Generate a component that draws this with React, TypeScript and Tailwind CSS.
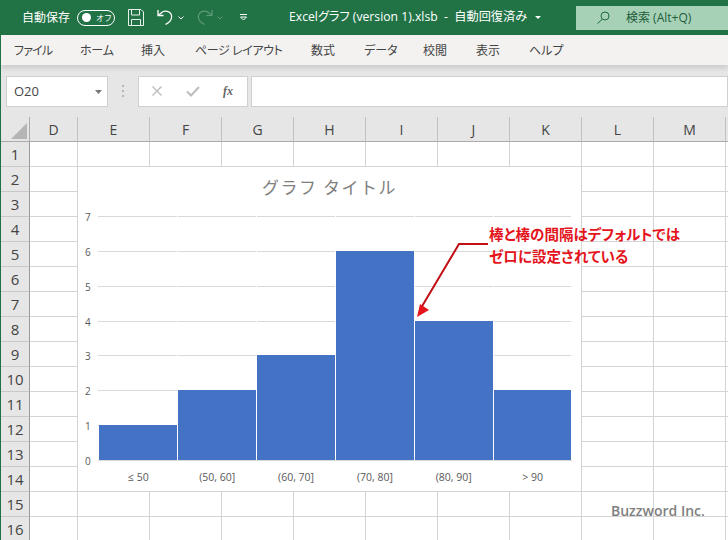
import React from "react";

const jp = "font-['Open_Sans','Noto_Sans_CJK_JP',sans-serif] [font-feature-settings:'palt']";
const columns: [string, number][] = [["D", 48], ["E", 72], ["F", 72], ["G", 72], ["H", 72], ["I", 72], ["J", 72], ["K", 72], ["L", 72], ["M", 72], ["", 3]];
const rows = Array.from({ length: 16 }, (_, i) => i + 1);
const menu: [string, string][] = [
  ["ファイル", "w-[38px] tracking-[-0.8px]"], ["ホーム", "w-[33px] tracking-[-0.2px]"], ["挿入", "w-[26px]"], ["ページ レイアウト", "w-[88px] tracking-[-0.4px]"],
  ["数式", "w-[25px]"], ["データ", "w-[31px]"], ["校閲", "w-[25px]"], ["表示", "w-[25px]"], ["ヘルプ", "w-[32px]"],
];
const bars = [1, 2, 3, 6, 4, 2];
const labels = ["≤ 50", "(50, 60]", "(60, 70]", "(70, 80]", "(80, 90]", "> 90"];

function TitleBar() {
  return (
    <div className="flex h-[35px] items-center bg-[#217346] text-white">
      <span className="ml-[21px] w-[48px] whitespace-nowrap text-[12px] leading-none">自動保存</span>
      <div className="ml-[7px] flex h-[16px] w-[38px] shrink-0 items-center rounded-full border border-white pl-[4px]">
        <span className="h-[9px] w-[9px] shrink-0 rounded-full bg-white" />
        <span className="ml-[5px] whitespace-nowrap text-[8px] leading-none">オフ</span>
      </div>
      <svg className="ml-[13px] shrink-0" width="16" height="17" viewBox="0 0 16 17" fill="none" stroke="#e8f1ec" strokeWidth="1">
        <path d="M.5.500h12.500l2.500 2.500v13.500H.5z" />
        <path d="M3.500.5v5.500h8V.5M3.500 16.500v-6h9v6" />
      </svg>
      <svg className="ml-[13px] shrink-0" width="16" height="17" viewBox="0 0 16 17" fill="none" stroke="#fff" strokeWidth="1.300">
        <path d="M1 1v5.500h5.500" />
        <path d="M1.500 6.200 5 3.200c3-2 8-1 9.300 2.400 1.200 3.400-.8 7-3.600 8.500l-2.200 1.400" />
      </svg>
      <svg className="ml-[5px] shrink-0" width="6" height="4" viewBox="0 0 6 4" fill="none" stroke="#fff" strokeWidth="1"><path d="m.5.500 2.500 2.500L5.500.5" /></svg>
      <svg className="ml-[13px] shrink-0" width="16" height="17" viewBox="0 0 16 17" fill="none" stroke="#5d9b79" strokeWidth="1.200">
        <path d="M15 1v5.500H9.500" />
        <path d="M14.500 6.200 11 3.200c-3-2-8-1-9.300 2.400-1.200 3.400.8 7 3.600 8.500l2.200 1.400" />
      </svg>
      <svg className="ml-[4px] shrink-0" width="6" height="4" viewBox="0 0 6 4" fill="none" stroke="#5d9b79" strokeWidth="1"><path d="m.5.500 2.500 2.500L5.500.5" /></svg>
      <svg className="ml-[17px] shrink-0" width="7" height="7" viewBox="0 0 7 7" fill="none" stroke="#fff" strokeWidth="1"><path d="M0 .5h7M.5 3l3 3 3-3z" /></svg>
      <span className={`ml-[42px] w-[241px] shrink-0 whitespace-pre text-[12.200px] leading-none ${jp}`}>Excelグラフ (version 1).xlsb  -  自動回復済み</span>
      <svg className="ml-[5px] shrink-0" width="6" height="3" viewBox="0 0 6 3" fill="#fff"><path d="M0 0h6L3 3z" /></svg>
      <div className="ml-[35px] flex h-[24px] flex-1 items-center bg-[#a6d1b6] pl-[21px] text-[#1e5c3a]">
        <svg className="shrink-0" width="13" height="13" viewBox="0 0 13 13" fill="none" stroke="#1e6a41" strokeWidth="1">
          <circle cx="8" cy="5" r="4" />
          <path d="M5 8.500.5 12.500" />
        </svg>
        <span className={`ml-[16px] whitespace-nowrap text-[12px] leading-none ${jp}`}>検索 (Alt+Q)</span>
      </div>
    </div>
  );
}

function MenuBar() {
  return (
    <div className="relative z-10 flex h-[30px] items-center gap-[28px] bg-[#f3f2f1] pl-[13px] pt-[2px] text-[#444] shadow-[0_3px_5px_rgba(0,0,0,0.12)]">
      {menu.map(([t, w]) => (
        <span key={t} className={`${w} shrink-0 whitespace-pre text-[12px] leading-none ${jp}`}>{t}</span>
      ))}
    </div>
  );
}

function FormulaBar() {
  return (
    <div className="flex h-[52px] items-start bg-[#e6e6e6] pl-[5px] pt-[11px]">
      <div className="flex h-[31px] w-[102px] items-center justify-between border border-[#d0d0d0] bg-white pl-[7px] pr-[5px]">
        <span className="font-['Open_Sans',sans-serif] text-[13px] text-[#444]">O20</span>
        <svg width="7" height="4" viewBox="0 0 7 4" fill="#777"><path d="M0 0h7L3.500 4z" /></svg>
      </div>
      <div className="ml-[14px] mr-[14px] mt-[9px] flex flex-col gap-[3px]">
        <span className="h-[2px] w-[2px] bg-[#b5b5b5]" />
        <span className="h-[2px] w-[2px] bg-[#b5b5b5]" />
        <span className="h-[2px] w-[2px] bg-[#b5b5b5]" />
      </div>
      <div className="flex h-[31px] w-[110px] items-center border border-[#d0d0d0] bg-white pb-[1px] pl-[13px]">
        <svg width="10" height="10" viewBox="0 0 10 10" fill="none" stroke="#bdbdbd" strokeWidth="1.400"><path d="m.5.500 9 9M9.500.5l-9 9" /></svg>
        <svg className="ml-[24px]" width="14" height="11" viewBox="0 0 14 11" fill="none" stroke="#bdbdbd" strokeWidth="2"><path d="m1 5.500 4 4L13 1" /></svg>
        <span className="ml-[23px] font-['Liberation_Serif',serif] text-[12px] font-bold italic leading-none text-[#666]">fx</span>
      </div>
      <div className="ml-[3px] h-[31px] flex-1 border border-[#d0d0d0] bg-white" />
    </div>
  );
}

function Chart() {
  return (
    <div className="absolute left-[77px] top-[25px] h-[324px] w-[503px] bg-white">
      <div className="flex h-[40px] items-center justify-center text-[17px] tracking-[1.500px] text-[#808080] font-['Noto_Sans_CJK_JP',sans-serif]">グラフ タイトル</div>
      <div className="mt-[9px] flex h-[245px] pl-[7px] pr-[9px]">
        <div className="-mt-[4px] flex h-[254px] w-[13px] shrink-0 flex-col justify-between text-[10px] leading-none text-[#595959] font-['Open_Sans',sans-serif]">
          {[7, 6, 5, 4, 3, 2, 1, 0].map((n) => (
            <span key={n} className="h-[10px]">{n}</span>
          ))}
        </div>
        <div className="relative flex-1 border-b border-[#d9d9d9]">
          <div className="flex h-full flex-col">
            {[0, 1, 2, 3, 4, 5, 6].map((n) => (
              <div key={n} className="flex-1 border-t border-[#d9d9d9]" />
            ))}
          </div>
          <div className="absolute inset-0 flex items-end pl-[1px]">
            {bars.map((v, i) => (
              <div key={i} className="flex h-full w-[79px] shrink-0 items-end border-r border-white last:w-[78px]">
                <div className="w-full bg-[#4472c4]" style={{ height: `${(v / 7) * 100}%` }} />
              </div>
            ))}
          </div>
        </div>
      </div>
      <div className="mt-[11px] flex pl-[21px] pr-[9px] text-[10.500px] leading-none text-[#595959] font-['Open_Sans',sans-serif]">
        {labels.map((l) => (
          <span key={l} className="flex-1 whitespace-nowrap text-center">{l}</span>
        ))}
      </div>
    </div>
  );
}

function Sheet() {
  return (
    <div className="relative flex-1 overflow-hidden bg-white">
      <div className="flex h-[25px] bg-[#e6e6e6]">
        <div className="relative w-[29px] shrink-0 border-b border-r border-[#ababab]">
          <span className="absolute bottom-[2px] right-[2px] h-0 w-0 border-b-[16px] border-l-[16px] border-b-[#b5b5b5] border-l-transparent" />
        </div>
        {columns.map(([c, w], i) => (
          <div key={i} style={{ width: w }} className="flex shrink-0 items-center justify-center border-b border-r border-b-[#ababab] border-r-[#c0c0c0] font-['Open_Sans',sans-serif] text-[14px] text-[#444]">
            {c}
          </div>
        ))}
      </div>
      <div className="relative">
        {rows.map((r) => (
          <div key={r} className="flex h-[25px]">
            <div className="flex w-[29px] shrink-0 items-center justify-center border-b border-r border-b-[#c8c8c8] border-r-[#9a9a9a] bg-[#e6e6e6] font-['Open_Sans',sans-serif] text-[15px] text-[#444]">
              {r}
            </div>
            {columns.map(([, w], i) => (
              <div key={i} style={{ width: w }} className="shrink-0 border-b border-r border-[#d4d4d4]" />
            ))}
          </div>
        ))}
        <Chart />
        <div className="absolute left-[488px] top-[81px] whitespace-nowrap text-[14.500px] font-bold leading-[22px] text-[#e3141c] font-['Noto_Sans_CJK_JP',sans-serif] [font-feature-settings:'palt']">
          棒と棒の間隔はデフォルトでは<br />ゼロに設定されている
        </div>
        <svg className="absolute left-[409px] top-[98px]" width="80" height="85" viewBox="0 0 80 85" fill="none">
          <path d="M78 4H49L11 68" stroke="#c00f16" strokeWidth="2" />
          <path d="m7 77 3-13 9 6z" fill="#e3141c" />
        </svg>
        <div className="absolute left-[610px] top-[362px] whitespace-nowrap font-['Open_Sans',sans-serif] text-[14px] font-semibold leading-none text-[#7f7f7f]">Buzzword Inc.</div>
      </div>
    </div>
  );
}

export default function App() {
  return (
    <div className="flex h-[540px] w-[728px] flex-col overflow-hidden border-l border-[#217346] font-['Open_Sans','Noto_Sans_CJK_JP',sans-serif]">
      <TitleBar />
      <MenuBar />
      <FormulaBar />
      <Sheet />
    </div>
  );
}
